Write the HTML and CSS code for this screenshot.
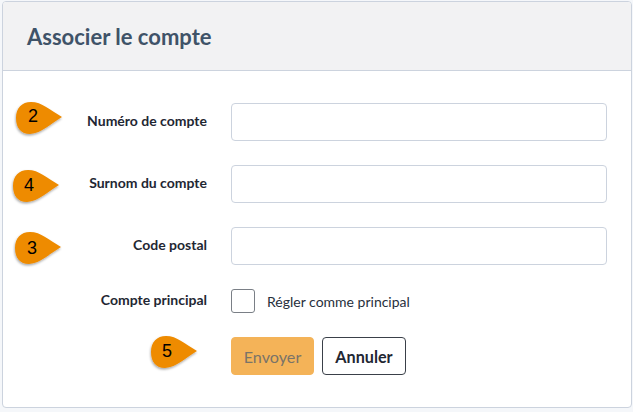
FILE: index.html
```html
<!DOCTYPE html>
<html lang="fr">
<head>
<meta charset="utf-8">
<title>Associer le compte</title>
<link rel="stylesheet" href="styles.css">
</head>
<body>
<svg class="defs" width="0" height="0" aria-hidden="true">
  <defs>
    <filter id="drop" x="-20%" y="-20%" width="140%" height="150%">
      <feDropShadow dx="-0.5" dy="1.5" stdDeviation="1.2" flood-color="#000" flood-opacity="0.35"/>
    </filter>
    <symbol id="pin" viewBox="0 0 52 38">
      <path d="M5 18C5 8 11 2 20 2C31 2 39 10 51 17C39 24 31 33 19 34C10 34 5 28 5 18Z" fill="#ee8b00" filter="url(#drop)"/>
    </symbol>
  </defs>
</svg>
<main class="card">
  <header class="card-head"><h1>Associer le compte</h1></header>
  <form class="form">
    <div class="row">
      <label class="label">Numéro de compte</label>
      <input class="field" type="text">
    </div>
    <div class="row">
      <label class="label">Surnom du compte</label>
      <input class="field" type="text">
    </div>
    <div class="row">
      <label class="label">Code postal</label>
      <input class="field" type="text">
    </div>
    <div class="row row-check">
      <span class="label label-check">Compte principal</span>
      <label class="check"><span class="box"></span><span>Régler comme principal</span></label>
    </div>
    <div class="row row-actions">
      <span class="label"></span>
      <div class="actions">
        <button class="btn btn-send" type="button">Envoyer</button>
        <button class="btn btn-cancel" type="button">Annuler</button>
      </div>
    </div>
  </form>
  <div class="pin pin-2"><svg class="pin-shape"><use href="#pin"/></svg><span class="pin-num">2</span></div>
  <div class="pin pin-4"><svg class="pin-shape"><use href="#pin"/></svg><span class="pin-num">4</span></div>
  <div class="pin pin-3"><svg class="pin-shape"><use href="#pin"/></svg><span class="pin-num">3</span></div>
  <div class="pin pin-5"><svg class="pin-shape"><use href="#pin"/></svg><span class="pin-num">5</span></div>
</main>
</body>
</html>
```
FILE: styles.css
```css
* { box-sizing: border-box; }
html, body { height: 100%; }
body {
  margin: 0;
  padding: 1px 1px 0 2px;
  background: #f5f7fa;
  font-family: Lato, "Liberation Sans", sans-serif;
  color: #1f2733;
  overflow: hidden;
}
.defs { position: absolute; }
.card {
  position: relative;
  height: 407px;
  background: #fff;
  border: 1px solid #ccd3de;
  border-radius: 4px;
}
.card-head {
  height: 69px;
  padding: 0 24px;
  display: flex;
  align-items: center;
  background: #f2f2f3;
  border-bottom: 1px solid #ccd3de;
  border-radius: 3px 3px 0 0;
}
.card-head h1 {
  margin: 0;
  font-size: 22px;
  font-weight: 700;
  color: #3f5368;
}
.form {
  padding-top: 32px;
  display: flex;
  flex-direction: column;
  gap: 24px;
}
.row {
  display: flex;
  align-items: center;
  gap: 24px;
}
.label {
  width: 204px;
  flex: none;
  text-align: right;
  font-size: 14px;
  font-weight: 700;
  color: #1f2733;
  margin-bottom: 4px;
}
.field {
  width: 376px;
  height: 38px;
  background: #fff;
  border: 1px solid #ccd3de;
  border-radius: 4px;
}
.check {
  display: flex;
  align-items: center;
  gap: 12px;
  font-size: 14px;
  color: #27303c;
}
.box {
  width: 24px;
  height: 24px;
  border: 1px solid #7a7f86;
  border-radius: 3px;
  background: #fff;
}
.actions {
  display: flex;
  gap: 8px;
}
.btn {
  height: 38px;
  width: 84px;
  border-radius: 4px;
  font-family: inherit;
  font-size: 16.2px;
  padding: 0;
}
.btn-send {
  width: 83px;
  background: #f4b358;
  border: 1px solid #f4b358;
  color: #7a7468;
}
.btn-cancel {
  background: #fff;
  border: 1px solid #3a4049;
  color: #1f2733;
  font-weight: 700;
}
.pin {
  position: absolute;
  width: 52px;
  height: 38px;
}
.pin-shape {
  position: absolute;
  inset: 0;
  width: 52px;
  height: 38px;
}
.pin-num {
  position: absolute;
  left: 5px;
  top: 0;
  width: 32px;
  height: 34px;
  display: flex;
  align-items: center;
  justify-content: center;
  font-family: "Liberation Sans", Arial, sans-serif;
  font-size: 18px;
  color: #000;
}
.pin-2 { left: 8px; top: 98px; }
.pin-2 .pin-num { left: 6px; top: -1px; }
.pin-4 { left: 5px; top: 166px; }
.pin-3 { left: 7px; top: 228px; }
.pin-3 .pin-num { left: 6px; top: 1px; }
.pin-5 { left: 143px; top: 332px; }
```
